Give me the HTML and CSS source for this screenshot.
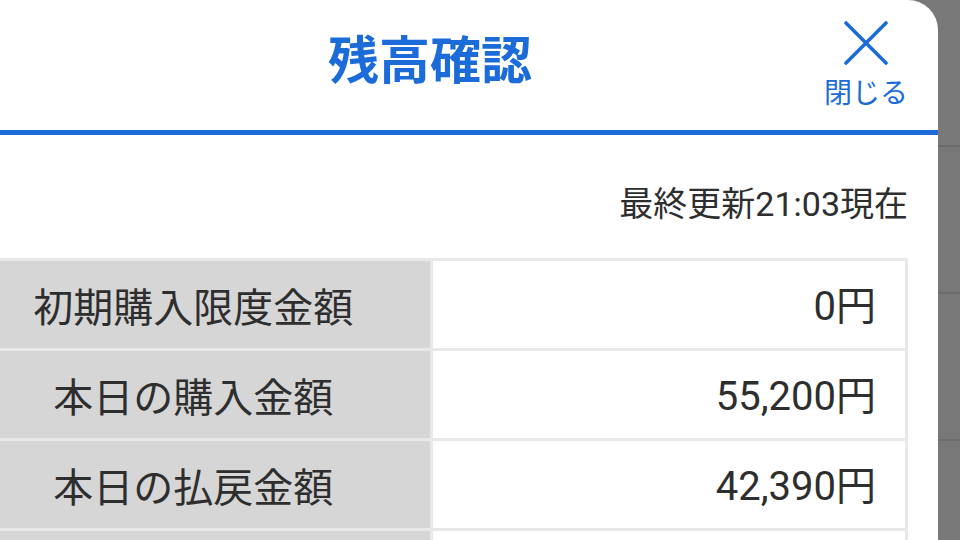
FILE: index.html
```html
<!DOCTYPE html>
<html lang=ja>
<head>
	<meta charset="UTF-8">
	<title>残高確認</title>
	<link rel="stylesheet" href="styles.css">
</head><body>
<div class=sheet>
	<header class=sheetHead>
		<h1 class=sheetTitle>残高確認</h1>
		<button class=close type=button>
			<svg width="44" height="44" viewBox="0 0 44 44"><path d="M2 2L42 42M42 2L2 42" stroke="#1b6bd9" stroke-width="3.6" stroke-linecap="round"/></svg>
			<span>閉じる</span>
		</button>
	</header>
	<p class=updated>最終更新<span class=num>21:03</span>現在</p>
	<table class=balance>
		<tr><td class=Label>初期購入限度金額</td><td class=Value><span class=num>0</span>円</td></tr>
		<tr><td class=Label>本日の購入金額</td><td class=Value><span class=num>55,200</span>円</td></tr>
		<tr><td class=Label>本日の払戻金額</td><td class=Value><span class=num>42,390</span>円</td></tr>
		<tr><td class=Label></td><td class=Value></td></tr>
	</table>
</div>
</body></html>
```

FILE: styles.css
```css
html, body { margin:0; height:100%; overflow:hidden; }
body {
	background:repeating-linear-gradient(to bottom, #787878 0 145px, #6c6c6c 145px 147px);
	font-family:"Noto Sans CJK JP", "Noto Sans", sans-serif;
	color:#2e2e2e;
}
.num { font-family:Roboto, "Noto Sans CJK JP", sans-serif; }

.sheet {
	margin-left:-78px; width:1016px; height:100%;
	background:white; border-top-right-radius:30px; overflow:hidden;
}

.sheetHead {
	height:130px; border-bottom:5px solid #1b6bd9;
	display:grid; grid-template-columns:1fr auto 1fr; align-items:start;
}
.sheetTitle {
	grid-column:2; margin:32px 0 0; font-size:51px; line-height:1;
	font-weight:bold; color:#1b6bd9;
}
.close {
	grid-column:3; justify-self:end; margin:21px 30px 0 0; padding:0;
	border:none; background:none; font:inherit; color:#1b6bd9;
	display:flex; flex-direction:column; align-items:center; gap:12px;
}
.close span { font-size:28px; line-height:1; }

.updated {
	margin:50px 30px 37px 0; text-align:right;
	font-size:34px; line-height:1;
}

.balance {
	width:954px; margin-left:32px;
	border-collapse:collapse; font-size:40px;
}
.balance td { border:3px solid #e8e8e8; height:87px; padding:0; width:50%; line-height:1; }
.balance .Label { background:#d6d6d6; text-align:center; }
.balance .Value { text-align:right; padding-right:29px; }
```
